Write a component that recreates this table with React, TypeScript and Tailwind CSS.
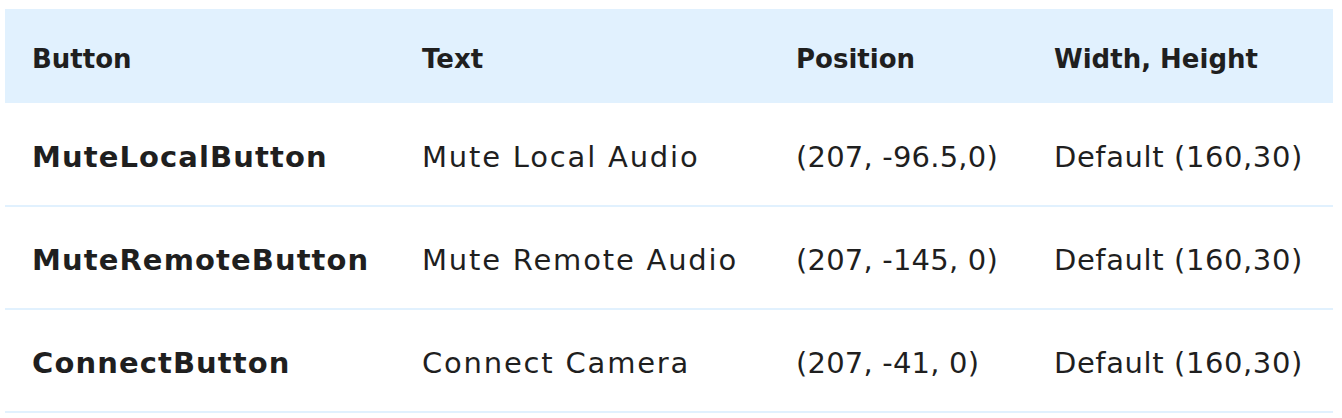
import React from "react";

const rows = [
  ["MuteLocalButton", "Mute Local Audio", "(207, -96.5,0)", "Default (160,30)"],
  ["MuteRemoteButton", "Mute Remote Audio", "(207, -145, 0)", "Default (160,30)"],
  ["ConnectButton", "Connect Camera", "(207, -41, 0)", "Default (160,30)"],
];

export default function App() {
  return (
    <div className="bg-white w-[1342px] h-[418px] pt-[9px] pl-[5px]" style={{ fontFamily: "'DejaVu Sans', Verdana, sans-serif" }}>
      <table className="w-[1328px] border-collapse text-[#1f1f1f] table-fixed">
        <colgroup>
          <col className="w-[390px]" />
          <col className="w-[374px]" />
          <col className="w-[258px]" />
          <col className="w-[306px]" />
        </colgroup>
        <thead>
          <tr className="bg-[#e1f1fe] h-[94px]">
            {["Button", "Text", "Position", "Width, Height"].map((h) => (
              <th key={h} className="text-left font-bold text-[26px] pl-[27px] pt-[7px] align-middle">
                {h}
              </th>
            ))}
          </tr>
        </thead>
        <tbody>
          {rows.map((r) => (
            <tr key={r[0]} className="h-[103px] border-b-2 border-[#e1f1fe]">
              <td className="pl-[27px] pt-[7px] font-bold text-[29px] tracking-[1.1px] align-middle">{r[0]}</td>
              <td className="pl-[27px] pt-[7px] text-[29px] tracking-[1.8px] align-middle">{r[1]}</td>
              <td className="pl-[27px] pt-[7px] text-[29px] tracking-[0.2px] align-middle">{r[2]}</td>
              <td className="pl-[27px] pt-[7px] text-[29px] tracking-[0.6px] align-middle">{r[3]}</td>
            </tr>
          ))}
        </tbody>
      </table>
    </div>
  );
}
